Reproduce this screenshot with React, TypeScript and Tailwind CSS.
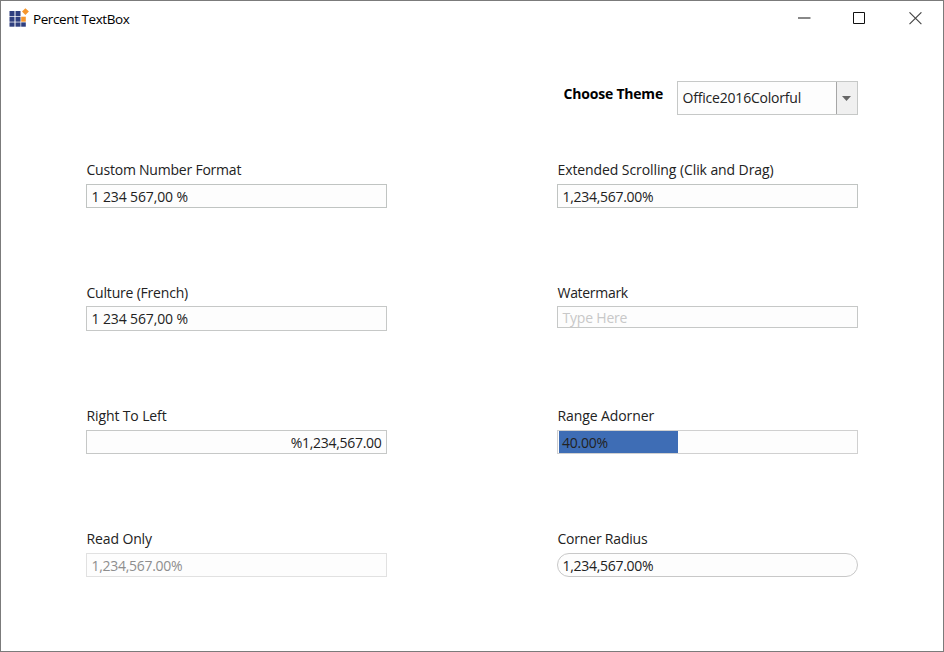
import React from "react";

type FieldProps = { label: string; labelClass?: string; children: React.ReactNode };

function Field({ label, labelClass = "", children }: FieldProps) {
  return (
    <div className="h-[123px] w-[301px]">
      <div className={`flex h-6 items-start whitespace-nowrap pl-[0.5px] text-[14px] leading-[19px] ${labelClass}`}>
        <span>{label}</span>
      </div>
      {children}
    </div>
  );
}

type BoxProps = { value: string; className?: string; textClass?: string };

function Box({ value, className = "h-6 border-[#c0c4c2] pl-[4.5px]", textClass = "tracking-[-0.29px]" }: BoxProps) {
  return (
    <div className={`flex items-center whitespace-pre border bg-[#fdfdfd] text-[14px] ${className}`}>
      <span className={textClass}>{value}</span>
    </div>
  );
}

function Logo() {
  return (
    <svg width="20" height="20" viewBox="0 0 20 20">
      <g fill="#2f3f7f">
        <rect x="0.5" y="3" width="5" height="5" />
        <rect x="6.5" y="3" width="5" height="5" />
        <rect x="0.5" y="8.7" width="5" height="5" />
        <rect x="6.5" y="8.7" width="5" height="5" />
        <rect x="0.5" y="14.4" width="5" height="4.3" />
        <rect x="6.5" y="14.4" width="5" height="4.3" />
        <rect x="12.2" y="14.4" width="4.6" height="4.3" />
      </g>
      <rect x="12.2" y="8.7" width="4.6" height="5" fill="#f6962c" />
      <path d="M16.4 0.2 L19.9 3.6 L16.4 7 L13 3.6 Z" fill="#f6962c" />
    </svg>
  );
}

export default function App() {
  return (
    <div className="h-[652px] w-[944px] overflow-hidden border border-[#7b7b7b] bg-white font-['Open_Sans','Noto_Sans',sans-serif] text-[#222222]">
      <header className="flex h-9 items-start justify-between pl-2">
        <div className="flex pt-[7px]">
          <Logo />
          <span className="ml-1 pt-px text-[13.5px] leading-5 tracking-[-0.42px] text-black">Percent TextBox</span>
        </div>
        <div className="flex pt-[11px] pr-[21px]">
          <svg width="13" height="13" viewBox="0 0 13 13" className="mr-[42px]">
            <path d="M0 6h12.5" stroke="#888888" strokeWidth="2" />
          </svg>
          <svg width="13" height="13" viewBox="0 0 13 13" className="mr-[43px]">
            <path d="M0.5 0.5h11v11h-11z" fill="none" stroke="#111111" />
          </svg>
          <svg width="13" height="13" viewBox="0 0 13 13">
            <path d="M0.5 0.3L12.4 12.2M12.4 0.3L0.5 12.2" stroke="#444444" strokeWidth="1.1" />
          </svg>
        </div>
      </header>

      <div className="flex h-[121px] items-start justify-end pt-[44px] pr-[85px]">
        <span className="mr-[14px] pt-[3px] text-[14px] leading-5 font-bold tracking-[-0.2px] text-black">Choose Theme</span>
        <div className="flex h-[34px] w-[181px] border border-[#c6c8c7] bg-[#fdfdfd]">
          <span className="flex-1 pl-[4.5px] text-[14px] leading-8 tracking-[-0.2px]">Office2016Colorful</span>
          <div className="flex w-[21px] items-center justify-center border-l border-[#a6a6a6] bg-[#f0f0f0] pr-px">
            <svg width="9" height="5" viewBox="0 0 9 5">
              <path d="M0 0h9L4.5 5z" fill="#666666" />
            </svg>
          </div>
        </div>
      </div>

      <main className="grid grid-cols-[301px_301px] gap-x-[170px] pt-[2px] pl-[85px]">
        <Field label="Custom Number Format" labelClass="tracking-[-0.22px]">
          <Box value="1 234 567,00 %" textClass="tracking-[-0.12px]" />
        </Field>
        <Field label="Extended Scrolling (Clik and Drag)" labelClass="tracking-[-0.09px]">
          <Box value="1,234,567.00%" />
        </Field>
        <Field label="Culture (French)" labelClass="tracking-[-0.2px]">
          <Box value="1 234 567,00 %" className="-mt-px h-[25px] border-[#c6c8c7] pl-[4.5px]" textClass="tracking-[-0.12px]" />
        </Field>
        <Field label="Watermark" labelClass="tracking-[-0.3px]">
          <Box value="Type Here" className="-mt-px h-[22px] border-[#c6c8c7] pl-[4.5px] text-[#c8c8c8]" textClass="tracking-[-0.2px] pt-px" />
        </Field>
        <Field label="Right To Left" labelClass="tracking-[-0.12px]">
          <Box value="%1,234,567.00" className="h-6 justify-end border-[#c6c8c7] pr-[4.5px]" />
        </Field>
        <Field label="Range Adorner" labelClass="tracking-[-0.1px]">
          <div className="h-6 border border-[#d0d0d0] bg-[#fdfdfd] pl-px">
            <div className="flex h-full w-[119px] items-center bg-[#3e6db5] pl-[3px] text-[14px] tracking-[-0.25px]">
              <span>40.00%</span>
            </div>
          </div>
        </Field>
        <Field label="Read Only" labelClass="tracking-[-0.12px]">
          <Box value="1,234,567.00%" className="h-6 border-[#e1e1e1] pl-[4.5px] text-[#8e8e8e]" />
        </Field>
        <Field label="Corner Radius" labelClass="tracking-[-0.2px]">
          <Box value="1,234,567.00%" className="h-6 rounded-full border-[#c8c8c8] pl-[4.5px]" />
        </Field>
      </main>
    </div>
  );
}
